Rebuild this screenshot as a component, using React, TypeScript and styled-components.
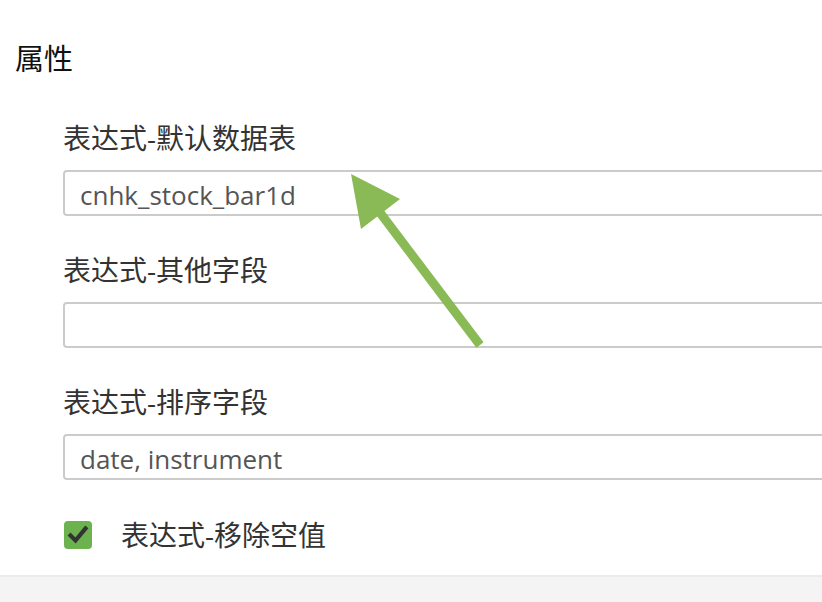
import React from 'react';
import styled, { createGlobalStyle } from 'styled-components';

const GlobalStyle = createGlobalStyle`
  html, body {
    margin: 0;
    padding: 0;
    background: #fff;
    overflow: hidden;
  }
  body {
    font-family: "Open Sans", "Noto Sans CJK SC", sans-serif;
  }
`;

const Page = styled.div`
  position: relative;
  width: 822px;
  height: 602px;
  display: flex;
  flex-direction: column;
  overflow: hidden;
`;

const Heading = styled.h2`
  margin: 39px 0 0 15px;
  font-size: 29px;
  line-height: 40px;
  font-weight: 400;
  color: #111;
`;

const Form = styled.div`
  display: flex;
  flex-direction: column;
  padding: 39px 0 0 63px;
  flex: 1;
`;

const Field = styled.div`
  display: flex;
  flex-direction: column;
  margin-bottom: 34px;
`;

const Label = styled.label`
  font-size: 28px;
  line-height: 40px;
  color: #333;
  margin-bottom: 12px;
`;

const Input = styled.div`
  box-sizing: border-box;
  width: calc(100% + 40px);
  height: 46px;
  border: 2px solid #cbcbcb;
  border-radius: 4px;
  padding: 0 0 0 15px;
  font-size: 26px;
  line-height: 46px;
  color: #555;
  overflow: hidden;
`;

const CheckRow = styled.div`
  display: flex;
  align-items: center;
  height: 40px;
  margin-top: 1px;
`;

const Box = styled.span`
  width: 28px;
  height: 28px;
  border-radius: 4px;
  background: #6cb350;
  display: flex;
  align-items: center;
  justify-content: center;
  margin-left: 1px;
  margin-right: 29px;
`;

const CheckLabel = styled.span`
  font-size: 28px;
  line-height: 40px;
  color: #333;
`;

const Footer = styled.div`
  height: 25px;
  background: #f4f4f4;
  border-top: 2px solid #ebebeb;
`;

const Arrow = styled.svg`
  position: absolute;
  left: 0;
  top: 0;
  pointer-events: none;
`;

const fields = [
  { label: '表达式-默认数据表', value: 'cnhk_stock_bar1d' },
  { label: '表达式-其他字段', value: '' },
  { label: '表达式-排序字段', value: 'date, instrument' },
];

const App: React.FC = () => (
  <Page>
    <GlobalStyle />
    <Heading>属性</Heading>
    <Form>
      {fields.map((f) => (
        <Field key={f.label}>
          <Label>{f.label}</Label>
          <Input>{f.value}</Input>
        </Field>
      ))}
      <CheckRow>
        <Box>
          <svg width="28" height="28" viewBox="0 0 28 28">
            <path d="M6.5 14.5 L11.5 19.5 L21.5 7.5" fill="none" stroke="#333" strokeWidth="4.2" strokeLinecap="square" />
          </svg>
        </Box>
        <CheckLabel>表达式-移除空值</CheckLabel>
      </CheckRow>
    </Form>
    <Footer />
    <Arrow width="822" height="602" viewBox="0 0 822 602">
      <line x1="378" y1="210" x2="480" y2="345" stroke="#8aba55" strokeWidth="9" />
      <polygon points="351,174 400,199 361,229" fill="#8aba55" />
    </Arrow>
  </Page>
);

export default App;
